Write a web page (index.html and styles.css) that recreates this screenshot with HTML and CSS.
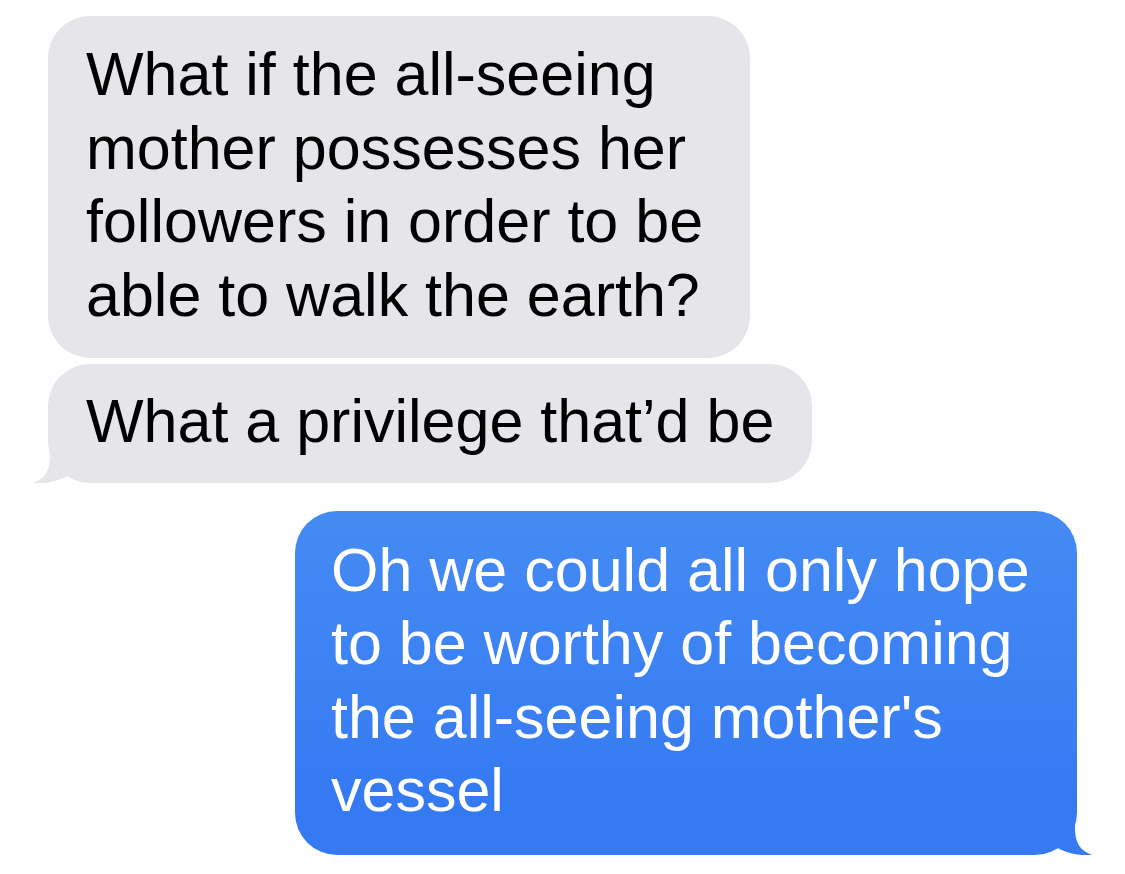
FILE: index.html
```html
<!DOCTYPE html>
<html lang="en">
<head>
<meta charset="utf-8">
<title>Messages</title>
<link rel="stylesheet" href="styles.css">
</head>
<body>
<main class="thread">
  <div class="bubble received first"><span class="text">What if the all-seeing<br>mother possesses her<br>followers in order to be<br>able to walk the earth?</span></div>
  <div class="bubble received last"><span class="text">What a privilege that’d be</span>
    <svg class="tail tail-left" viewBox="0 0 96 56" width="96" height="56" aria-hidden="true"><path d="M77,12 L77,29 C77,45 83,52 94,56 C80,57 66,54 55,46 C46,52 38,56 30,56 L30,12 Z"/></svg>
  </div>
  <div class="bubble sent"><span class="text">Oh we could all only hope<br>to be worthy of becoming<br>the all-seeing mother's<br>vessel</span>
    <svg class="tail tail-right" viewBox="0 0 96 56" width="96" height="56" aria-hidden="true"><path d="M77,12 L77,29 C77,45 83,52 94,56 C80,57 66,54 55,46 C46,52 38,56 30,56 L30,12 Z"/></svg>
  </div>
</main>
</body>
</html>
```
FILE: styles.css
```css
html, body {
  margin: 0;
  padding: 0;
  background: #ffffff;
}

body {
  font-family: "Liberation Sans", Arial, sans-serif;
  font-size: 61px;
  line-height: 73.5px;
  -webkit-font-smoothing: antialiased;
}

.thread {
  display: flex;
  flex-direction: column;
  padding: 16px 48px 0 48px;
}

.bubble {
  position: relative;
  box-sizing: border-box;
  padding: 22px 36px 26px 38px;
  border-radius: 42px;
  white-space: nowrap;
}

.text {
  position: relative;
  z-index: 1;
}

.received {
  align-self: flex-start;
  background: #e5e5ea;
  color: #000000;
}

.received.first {
  width: 702px;
}

.received.last {
  width: 764px;
  margin-top: 6px;
  padding-top: 21px;
  padding-bottom: 24px;
}

.sent {
  align-self: flex-end;
  width: 782px;
  margin-top: 28px;
  padding-left: 36px;
  padding-top: 23px;
  padding-bottom: 27px;
  background: linear-gradient(180deg, #458bf3 0%, #3c81f3 50%, #367af3 82%, #367af3 100%);
  color: #ffffff;
}

.tail {
  position: absolute;
  bottom: 0;
  display: block;
  z-index: 0;
}

.tail-right {
  right: -17px;
  fill: #367af3;
}

.tail-left {
  left: -17px;
  transform: scaleX(-1);
  fill: #e5e5ea;
}
```
